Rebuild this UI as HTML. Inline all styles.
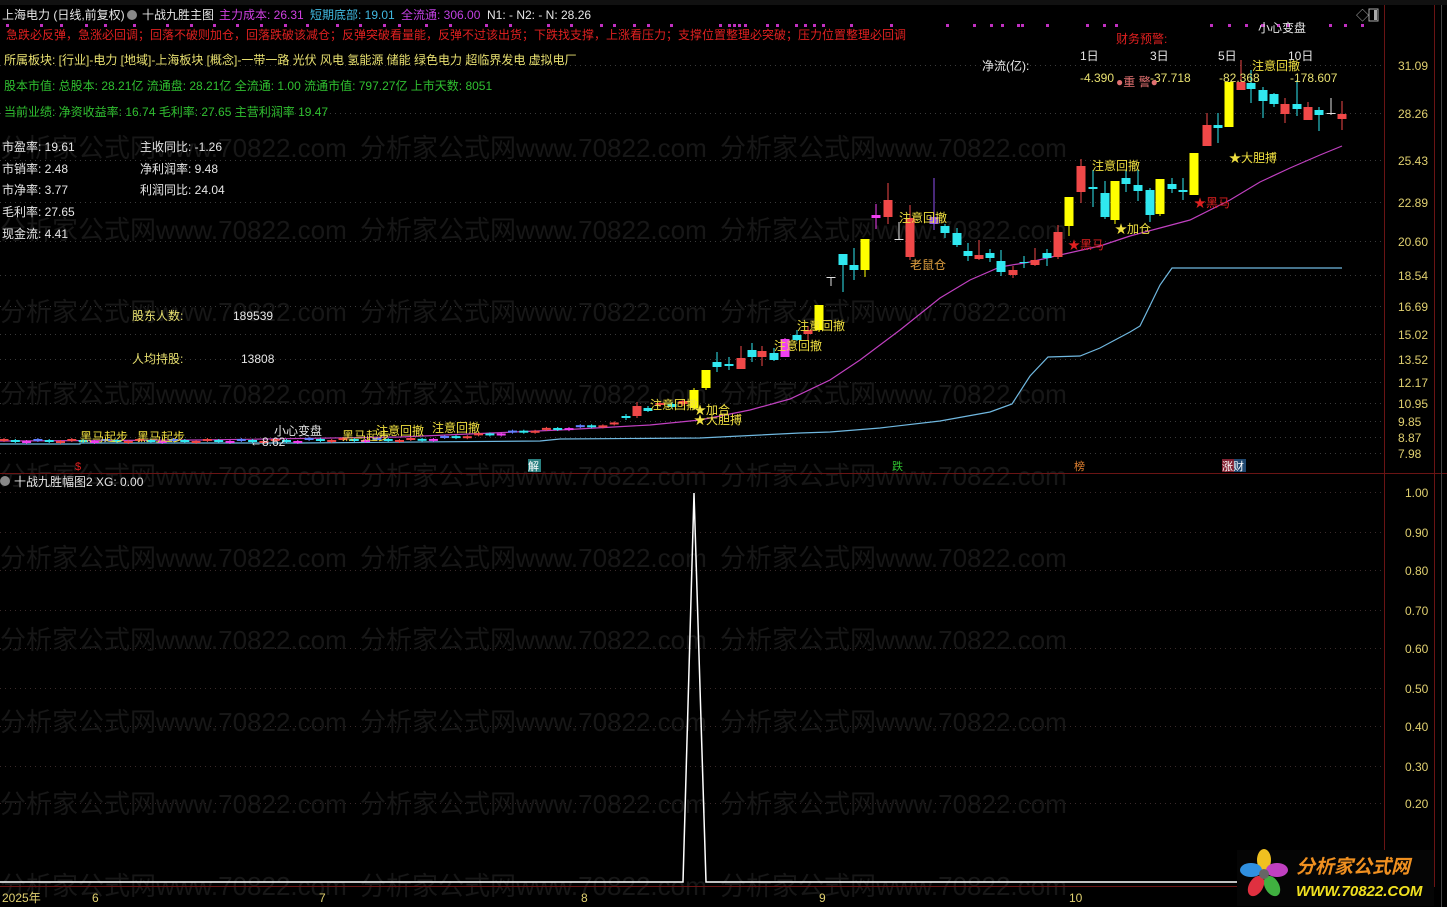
<!DOCTYPE html>
<html><head><meta charset="utf-8">
<style>
html,body{margin:0;padding:0;background:#000;width:1447px;height:907px;overflow:hidden}
svg{display:block;font-size:12px}
text{font-family:"Liberation Sans","Noto Sans CJK SC",sans-serif}
</style></head><body>
<svg id="s" width="1447" height="907" xmlns="http://www.w3.org/2000/svg" font-size="12">
<rect width="1447" height="907" fill="#000"/>
<g id="grid"></g>
<g id="wm" fill="#171717"></g>
<line x1="1384.5" y1="0" x2="1384.5" y2="887" stroke="#6a1414"/>
<line x1="1434.5" y1="0" x2="1434.5" y2="887" stroke="#6a1414"/>
<line x1="0" y1="473.5" x2="1447" y2="473.5" stroke="#6a1414"/>
<line x1="0" y1="886.5" x2="1434" y2="886.5" stroke="#6a1414"/>
<line x1="1441.5" y1="0" x2="1441.5" y2="907" stroke="#444"/>
<rect x="0" y="0" width="1447" height="5" fill="#111"/>
<g id="lines"></g>
<g id="candles"></g>
<text x="2" y="19" fill="#e6e6e6">上海电力 (日线,前复权)</text>
<circle cx="132" cy="15" r="5" fill="#888"/>
<text x="142" y="19" fill="#e6e6e6">十战九胜主图</text>
<text x="219" y="19" fill="#d040e0">主力成本: 26.31</text>
<text x="310" y="19" fill="#40b8e0">短期底部: 19.01</text>
<text x="401" y="19" fill="#c040e0">全流通: 306.00</text>
<text x="487" y="19" fill="#e6e6e6">N1: -  N2: -  N: 28.26</text>
<g id="dots" fill="#c030c0"></g>
<text x="6" y="39" fill="#e02020">急跌必反弹，急涨必回调；回落不破则加仓，回落跌破该减仓；反弹突破看量能，反弹不过该出货；下跌找支撑，上涨看压力；支撑位置整理必突破；压力位置整理必回调</text>
<text x="4" y="64" fill="#e8e070">所属板块: [行业]-电力 [地域]-上海板块 [概念]-一带一路 光伏 风电 氢能源 储能 绿色电力 超临界发电 虚拟电厂</text>
<text x="4" y="90" fill="#30c030">股本市值: 总股本: 28.21亿 流通盘: 28.21亿 全流通: 1.00 流通市值: 797.27亿 上市天数: 8051</text>
<text x="4" y="116" fill="#30c030">当前业绩: 净资收益率: 16.74 毛利率: 27.65 主营利润率 19.47</text>
<g fill="#e6e6e6">
<text x="2" y="151">市盈率: 19.61</text><text x="140" y="151">主收同比: -1.26</text>
<text x="2" y="173">市销率: 2.48</text><text x="140" y="173">净利润率: 9.48</text>
<text x="2" y="194">市净率: 3.77</text><text x="140" y="194">利润同比: 24.04</text>
<text x="2" y="216">毛利率: 27.65</text>
<text x="2" y="238">现金流: 4.41</text>
<text x="233" y="320">189539</text>
<text x="241" y="363">13808</text>
</g>
<text x="132" y="320" fill="#e8e070">股东人数:</text>
<text x="132" y="363" fill="#e8e070">人均持股:</text>
<text x="1116" y="43" fill="#e02020">财务预警:</text>
<text x="982" y="70" fill="#e6e6e6">净流(亿):</text>
<text x="1080" y="60" fill="#e6e6e6">1日</text>
<text x="1150" y="60" fill="#e6e6e6">3日</text>
<text x="1218" y="60" fill="#e6e6e6">5日</text>
<text x="1288" y="60" fill="#e6e6e6">10日</text>
<text x="1080" y="82" fill="#e8e070">-4.390</text>
<text x="1150" y="82" fill="#e8e070">-37.718</text>
<text x="1219" y="82" fill="#e8e070">-82.368</text>
<text x="1290" y="82" fill="#e8e070">-178.607</text>
<text x="1116" y="86" fill="#e07070">●重 警●</text>
<text x="1258" y="32" fill="#e6e6e6">小心变盘</text>
<text x="1356" y="20" fill="#aaa" font-size="13">◇</text>
<rect x="1369" y="9" width="9" height="12" fill="none" stroke="#aaa"/>
<rect x="1374" y="10" width="3" height="10" fill="#aaa"/>
<g fill="#e0d070" id="ylab"></g>
<g fill="#f0e040">
<text x="80" y="441">黑马起步</text><text x="137" y="441">黑马起步</text>
<text x="342" y="440">黑马起步</text><text x="376" y="435">注意回撤</text><text x="432" y="432">注意回撤</text>
<text x="650" y="409">注意回撤</text><text x="694" y="414">★加合</text><text x="694" y="424">★大胆搏</text>
<text x="774" y="350">注意回撤</text><text x="797" y="330">注意回撤</text>
<text x="899" y="222">注意回撤</text><text x="1092" y="170">注意回撤</text>
<text x="1115" y="233">★加仓</text><text x="1229" y="162">★大胆搏</text>
<text x="1252" y="70">注意回撤</text>
</g>
<text x="910" y="269" fill="#e0a040">老鼠仓</text>
<text x="274" y="435" fill="#e6e6e6">小心变盘</text>
<text x="250" y="446" fill="#e6e6e6">←8.62</text>
<text x="1068" y="249" fill="#e02020">★黑马</text>
<text x="1194" y="207" fill="#e02020">★黑马</text>
<text x="75" y="470" fill="#e02020" font-size="11">$</text>
<rect x="528" y="459" width="13" height="13" fill="#2a8080"/><text x="528" y="470" fill="#fff" font-size="11">解</text>
<text x="892" y="470" fill="#30c030" font-size="11">跌</text>
<text x="1074" y="470" fill="#e08030" font-size="11">榜</text>
<rect x="1222" y="459" width="12" height="13" fill="#802030"/><rect x="1234" y="459" width="12" height="13" fill="#204870"/>
<text x="1222" y="470" fill="#fff" font-size="11">涨财</text>
<circle cx="5" cy="481" r="5" fill="#888"/>
<text x="14" y="486" fill="#e6e6e6">十战九胜幅图2  XG: 0.00</text>
<polyline points="0,882 683,882 694,493 706,882 1240,882" fill="none" stroke="#fff" stroke-width="1.5"/>
<g fill="#e0d070">
<text x="2" y="902">2025年</text><text x="92" y="902">6</text><text x="319" y="902">7</text><text x="581" y="902">8</text><text x="819" y="902">9</text><text x="1069" y="902">10</text>
</g>
<rect x="1237" y="850" width="197" height="56" fill="#050505"/>
<g transform="translate(1264,874)">
<ellipse cx="0" cy="-14" rx="7" ry="11" fill="#f0c020"/>
<ellipse cx="13" cy="-4" rx="11" ry="7" fill="#c040c0"/>
<ellipse cx="8" cy="12" rx="7" ry="11" fill="#40b040" transform="rotate(-30 8 12)"/>
<ellipse cx="-8" cy="12" rx="7" ry="11" fill="#e03040" transform="rotate(30 -8 12)"/>
<ellipse cx="-13" cy="-4" rx="11" ry="7" fill="#3090e0"/>
<circle r="5" fill="#666"/>
</g>
<text x="1296" y="873" fill="#f09020" font-size="19" font-weight="bold" font-style="italic">分析家公式网</text>
<text x="1296" y="896" fill="#f0e020" font-size="15" font-weight="bold" font-style="italic">WWW.70822.COM</text>
</svg>
<script>
var NS="http://www.w3.org/2000/svg";
function el(p,t,a,txt){var e=document.createElementNS(NS,t);for(var k in a)e.setAttribute(k,a[k]);if(txt)e.textContent=txt;document.getElementById(p).appendChild(e);return e;}
var ys=[65,113,160,202,241,275,306,334,359,382,403,421,437,453];
var lab=["31.09","28.26","25.43","22.89","20.60","18.54","16.69","15.02","13.52","12.17","10.95","9.85","8.87","7.98"];
ys.forEach(function(y,i){el("grid","line",{x1:0,y1:y+.5,x2:1384,y2:y+.5,stroke:"#3a3a3a","stroke-dasharray":"1 4"});el("ylab","text",{x:1398,y:y+5},lab[i]);});
var by=[492,532,570,610,648,688,726,766,803],bl=["1.00","0.90","0.80","0.70","0.60","0.50","0.40","0.30","0.20"];
by.forEach(function(y,i){el("grid","line",{x1:0,y1:y+.5,x2:1384,y2:y+.5,stroke:"#3a2a2a","stroke-dasharray":"1 4"});el("ylab","text",{x:1405,y:y+5},bl[i]);});
[147,229,311,393,475,557,639,721,803,885].forEach(function(y){for(var x=0;x<1000;x+=360){el("wm","text",{x:x,y:y+10,"font-size":"26"},"分析家公式网www.70822.com");}});
[6,40,60,85,104,133,166,190,213,236,260,284,306,336,359,383,398,425,449,485,509,547,570,600,613,633,647,670,719,728,733,738,744,766,776,795,804,813,822,850,890,946,973,990,1001,1017,1021,1046,1086,1103,1115,1210,1228,1245,1261,1262,1277,1287,1329,1344,1361].forEach(function(x){el("dots","rect",{x:x,y:24,width:3,height:3});});
el("lines","polyline",{points:"0,441 200,440 400,437 560,430 650,425 700,420 750,410 790,399 830,380 860,360 900,330 940,298 970,280 1000,267 1030,262 1060,255 1100,246 1130,236 1160,228 1190,220 1230,200 1260,182 1290,168 1320,155 1342,146",fill:"none",stroke:"#c040c0","stroke-width":1.2});
el("lines","polyline",{points:"0,444 80,444 80,443 300,443 540,441 560,439 700,438 800,433 830,432 880,428 940,421 990,412 1012,404 1030,376 1048,357 1080,356 1100,348 1130,332 1140,326 1160,285 1172,268 1342,268",fill:"none",stroke:"#70b8e0","stroke-width":1.2});
var R="#f04848",C="#30e8f0",Y="#ffff00",M="#f040f0",W="#e0e0e0",P="#9050f0";
var cs=[[626,416,418,414,420,C],[637,406,416,402,418,R],[648,408,411,406,412,C],[660,403,405,401,407,R],[672,404,407,402,409,C],[683,401,404,399,406,R],
[694,390,408,388,410,Y],[706,370,388,370,390,Y],[717,362,367,352,372,C],[729,364,366,357,370,C],[741,358,369,346,369,R],[752,350,357,343,362,C],[762,351,357,346,366,R],[774,353,360,348,361,C],[785,339,357,338,357,M],[797,335,340,330,341,C],[808,330,334,326,340,R],[819,305,330,305,332,Y],[831,277,278,277,286,W],[843,254,265,254,292,C],[854,265,270,248,280,C],[865,239,270,239,277,Y],[876,215,218,204,229,M],[888,200,217,183,224,R],[899,239,240,222,240,W],[910,218,257,205,260,R],[934,217,224,178,230,P],[945,226,233,224,238,C],[957,233,245,228,247,C],[968,251,256,243,261,C],[979,255,259,240,260,R],[990,253,258,249,262,C],[1001,261,272,250,276,C],[1013,270,275,266,278,R],[1024,262,263,256,268,C],[1035,260,265,248,266,R],[1047,253,258,249,266,C],[1058,232,257,225,259,R],[1069,197,226,197,236,Y],[1081,166,192,159,203,R],[1093,187,189,170,207,C],[1105,193,217,181,219,C],[1115,181,220,181,224,Y],[1126,178,184,170,192,C],[1138,185,191,170,201,C],[1150,190,215,188,222,C],[1160,179,214,179,216,Y],[1172,184,189,178,193,C],[1183,190,192,178,200,C],[1194,153,195,153,195,Y],[1207,125,146,113,146,R],[1218,125,128,113,143,C],[1229,82,127,82,127,Y],[1241,82,90,60,90,R],[1251,83,89,70,103,C],[1263,90,101,87,118,C],[1274,94,104,93,107,C],[1285,104,114,98,123,R],[1297,104,109,80,116,C],[1308,107,120,102,120,R],[1319,110,115,107,131,C],[1331,113,114,98,115,W],[1342,114,119,101,130,R]];
var cols=[R,C,M,"#6080ff",C,R];
for(var x=4,i=0;x<620;x+=11.3,i++){var y=440-Math.max(0,(x-420))*0.08-(x<300?0:1)+(i%3);cs.unshift([x,y-1,y+1,y-2,y+2,cols[i%6]]);}
cs.forEach(function(c){el("candles","line",{x1:c[0],y1:c[3],x2:c[0],y2:c[4],stroke:c[5]});el("candles","rect",{x:c[0]-4.5,y:c[1],width:9,height:Math.max(1,c[2]-c[1]),fill:c[5]});});
</script>
</body></html>
